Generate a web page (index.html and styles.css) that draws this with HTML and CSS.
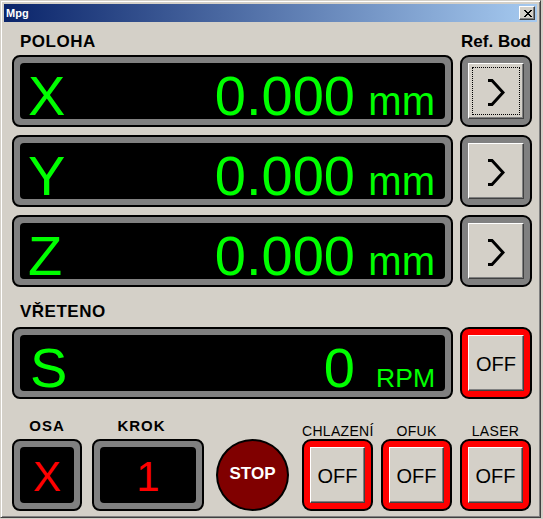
FILE: index.html
```html
<!DOCTYPE html>
<html>
<head>
<meta charset="utf-8">
<title>Mpg</title>
<link rel="stylesheet" href="styles.css">
</head>
<body>
<div class="window">
  <div class="titlebar">
    <span class="title">Mpg</span>
    <div class="close">
      <svg width="8" height="7" viewBox="0 0 8 7"><path d="M0 0h2v1h-2z M6 0h2v1h-2z M1 1h2v1h-2z M5 1h2v1h-2z M2 2h4v1h-4z M3 3h2v1h-2z M2 4h4v1h-4z M1 5h2v1h-2z M5 5h2v1h-2z M0 6h2v1h-2z M6 6h2v1h-2z" fill="#000"/></svg>
    </div>
  </div>
  <div class="panel">
    <div class="head">
      <span class="label label-left">POLOHA</span>
      <span class="label label-ref">Ref. Bod</span>
    </div>
    <div class="rows">
      <div class="row">
        <div class="display"><div class="screen"><span class="axis">X</span><span class="value">0.000</span><span class="unit">mm</span></div></div>
        <div class="ring"><div class="face"><div class="focus focus-on">
          <svg class="chev" width="18" height="27" viewBox="0 0 18 27"><path d="M1 1.5H5L16 13.5L5 25.5H1" fill="none" stroke="#000" stroke-width="3"/></svg>
        </div></div></div>
      </div>
      <div class="row">
        <div class="display"><div class="screen"><span class="axis">Y</span><span class="value">0.000</span><span class="unit">mm</span></div></div>
        <div class="ring"><div class="face"><div class="focus">
          <svg class="chev" width="18" height="27" viewBox="0 0 18 27"><path d="M1 1.5H5L16 13.5L5 25.5H1" fill="none" stroke="#000" stroke-width="3"/></svg>
        </div></div></div>
      </div>
      <div class="row">
        <div class="display"><div class="screen"><span class="axis">Z</span><span class="value">0.000</span><span class="unit">mm</span></div></div>
        <div class="ring"><div class="face"><div class="focus">
          <svg class="chev" width="18" height="27" viewBox="0 0 18 27"><path d="M1 1.5H5L16 13.5L5 25.5H1" fill="none" stroke="#000" stroke-width="3"/></svg>
        </div></div></div>
      </div>
    </div>
    <div class="head head-spindle">
      <span class="label label-left">VŘETENO</span>
    </div>
    <div class="row">
      <div class="display"><div class="screen"><span class="axis axis-s">S</span><span class="value">0</span><span class="unit unit-rpm">RPM</span></div></div>
      <div class="ring ring-red"><div class="face face-text">OFF</div></div>
    </div>
    <div class="bottom">
      <div class="col col-osa">
        <div class="blabel">OSA</div>
        <div class="display display-small"><div class="screen-small">X</div></div>
      </div>
      <div class="col col-krok">
        <div class="blabel blabel-krok">KROK</div>
        <div class="display display-krok"><div class="screen-small">1</div></div>
      </div>
      <div class="col col-stop">
        <div class="stop">STOP</div>
      </div>
      <div class="col col-btn">
        <div class="slabel">CHLAZENÍ</div>
        <div class="ring ring-red ring-small"><div class="face face-text">OFF</div></div>
      </div>
      <div class="col col-btn">
        <div class="slabel">OFUK</div>
        <div class="ring ring-red ring-small"><div class="face face-text">OFF</div></div>
      </div>
      <div class="col col-btn">
        <div class="slabel">LASER</div>
        <div class="ring ring-red ring-small"><div class="face face-text">OFF</div></div>
      </div>
    </div>
  </div>
</div>
</body>
</html>
```
FILE: styles.css
```css
* { box-sizing: border-box; }
html, body { margin: 0; padding: 0; background: #d4d0c8; }
body {
  width: 543px;
  height: 519px;
  overflow: hidden;
  font-family: "Liberation Sans", Arial, sans-serif;
  color: #000;
}
.window {
  width: 541px;
  height: 518px;
  border: 1px solid;
  border-color: #d4d0c8 #404040 #404040 #d4d0c8;
  box-shadow: inset 1px 1px #fff, inset -1px -1px #808080;
  padding: 3px;
  background: #d4d0c8;
}
.titlebar {
  height: 18px;
  background: linear-gradient(to right, #0a246a, #a6caf0);
  display: flex;
  align-items: center;
  justify-content: space-between;
  padding: 0 2px 0 2px;
}
.title {
  color: #fff;
  font-weight: bold;
  font-size: 11px;
  line-height: 18px;
}
.close {
  width: 16px;
  height: 14px;
  background: #d4d0c8;
  border: 1px solid;
  border-color: #fff #404040 #404040 #fff;
  box-shadow: inset -1px -1px #808080;
  display: flex;
  align-items: center;
  justify-content: center;
  padding-left: 1px;
}
.close svg { display: block; }
.panel {
  padding: 0 5px 0 8px;
}
.head {
  display: flex;
  justify-content: space-between;
  padding-top: 10px;
  margin-bottom: 3px;
}
.head-spindle {
  padding-top: 0;
  margin-top: 15px;
  margin-bottom: 5px;
}
.label {
  font-weight: bold;
  font-size: 17px;
  line-height: 20px;
  letter-spacing: 0.5px;
  white-space: nowrap;
}
.label-left { padding-left: 8px; }
.label-ref {
  width: 72px;
  text-align: center;
  letter-spacing: 0;
}
.rows {
  display: flex;
  flex-direction: column;
  gap: 8px;
}
.row {
  display: flex;
  gap: 7px;
}
.display {
  width: 441px;
  height: 72px;
  border: 2px solid #000;
  border-radius: 8px;
  background: #808080;
  padding: 6px;
}
.screen {
  height: 56px;
  background: #000;
  border-radius: 4px;
  display: flex;
  align-items: baseline;
  padding: 10px 10px 0 8px;
  color: #00ff00;
}
.axis {
  font-size: 56px;
  line-height: 46px;
}
.axis-s { padding-left: 2px; }
.value {
  margin-left: auto;
  font-size: 56px;
  line-height: 46px;
}
.unit {
  width: 80px;
  text-align: right;
  font-size: 40px;
  line-height: 46px;
}
.unit-rpm { font-size: 26.5px; }
.ring {
  width: 72px;
  height: 72px;
  border: 2px solid #000;
  border-radius: 9px;
  background: #808080;
  padding: 6px;
}
.ring-red { background: #ff0000; }
.ring-small { width: 71px; }
.face {
  height: 56px;
  background: #d4d0c8;
  border: 1px solid;
  border-color: #fff #404040 #404040 #fff;
  box-shadow: inset -1px -1px #808080;
  display: flex;
}
.focus {
  flex: 1;
  margin: 3px;
  border: 1px dotted transparent;
  display: flex;
  align-items: center;
  justify-content: center;
  padding-top: 3px;
}
.focus-on { border-color: #000; }
.chev { display: block; }
.face-text {
  display: block;
  text-align: center;
  font-size: 20px;
  line-height: 52px;
  padding-top: 2px;
}
.bottom {
  height: 112px;
  display: flex;
  align-items: flex-end;
}
.col {
  display: flex;
  flex-direction: column;
  align-items: stretch;
}
.col-osa { width: 70px; }
.col-krok { width: 112px; margin-left: 10px; }
.col-stop { width: 73px; margin-left: 12px; }
.col-btn { width: 71px; margin-left: 8px; }
.col-stop + .col-btn { margin-left: 13px; }
.blabel {
  font-weight: bold;
  font-size: 15px;
  line-height: 16px;
  letter-spacing: 1px;
  text-align: center;
  margin-bottom: 5px;
}
.blabel-krok { margin-right: 13px; }
.slabel {
  font-size: 14px;
  line-height: 16px;
  letter-spacing: 0.3px;
  text-align: center;
  white-space: nowrap;
}
.display-small { width: 70px; }
.display-krok { width: 112px; }
.screen-small {
  height: 56px;
  background: #000;
  border-radius: 4px;
  color: #ff0000;
  text-align: center;
  font-size: 42px;
  line-height: 52px;
  padding-top: 4px;
}
.stop {
  width: 73px;
  height: 72px;
  border-radius: 50%;
  border: 2px solid #000;
  background: #800000;
  color: #fff;
  font-weight: bold;
  font-size: 17px;
  line-height: 65px;
  padding-bottom: 3px;
  text-align: center;
}
```
